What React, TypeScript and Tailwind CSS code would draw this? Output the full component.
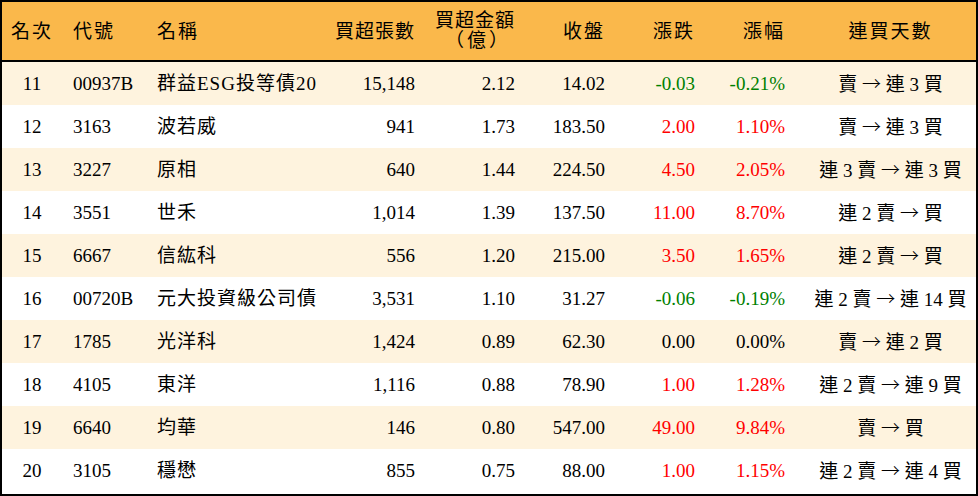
const rows = [
  { rank: '11', code: '00937B', name: '群益ESG投等債20', vol: '15,148', amt: '2.12', close: '14.02', chg: '-0.03', pct: '-0.21%', streak: '賣 → 連 3 買' },
  { rank: '12', code: '3163', name: '波若威', vol: '941', amt: '1.73', close: '183.50', chg: '2.00', pct: '1.10%', streak: '賣 → 連 3 買' },
  { rank: '13', code: '3227', name: '原相', vol: '640', amt: '1.44', close: '224.50', chg: '4.50', pct: '2.05%', streak: '連 3 賣 → 連 3 買' },
  { rank: '14', code: '3551', name: '世禾', vol: '1,014', amt: '1.39', close: '137.50', chg: '11.00', pct: '8.70%', streak: '連 2 賣 → 買' },
  { rank: '15', code: '6667', name: '信紘科', vol: '556', amt: '1.20', close: '215.00', chg: '3.50', pct: '1.65%', streak: '連 2 賣 → 買' },
  { rank: '16', code: '00720B', name: '元大投資級公司債', vol: '3,531', amt: '1.10', close: '31.27', chg: '-0.06', pct: '-0.19%', streak: '連 2 賣 → 連 14 買' },
  { rank: '17', code: '1785', name: '光洋科', vol: '1,424', amt: '0.89', close: '62.30', chg: '0.00', pct: '0.00%', streak: '賣 → 連 2 買' },
  { rank: '18', code: '4105', name: '東洋', vol: '1,116', amt: '0.88', close: '78.90', chg: '1.00', pct: '1.28%', streak: '連 2 賣 → 連 9 買' },
  { rank: '19', code: '6640', name: '均華', vol: '146', amt: '0.80', close: '547.00', chg: '49.00', pct: '9.84%', streak: '賣 → 買' },
  { rank: '20', code: '3105', name: '穩懋', vol: '855', amt: '0.75', close: '88.00', chg: '1.00', pct: '1.15%', streak: '連 2 賣 → 連 4 買' },
];

const cols = 'grid grid-cols-[60px_86px_182px_95px_100px_90px_90px_90px_181px]';

function tone(v: string) {
  if (v.startsWith('-')) return 'text-[#008000]';
  if (parseFloat(v) === 0) return 'text-black';
  return 'text-[#ff0000]';
}

// arrow drawn from the CJK font so it keeps the long full-width shape
function Streak({ text }: { text: string }) {
  const [from, to] = text.split(' → ');
  return (
    <>
      {from}{' '}
      <span style={{ fontFamily: '"Noto Sans CJK TC", sans-serif' }} className="font-light">→</span>
      {' '}{to}
    </>
  );
}

export default function App() {
  return (
    <div
      className="w-[978px] h-[496px] border-2 border-black bg-white text-black text-[19px] leading-none"
      style={{ fontFamily: '"Liberation Serif", "Noto Sans CJK TC", serif' }}
    >
      {/* header */}
      <div className={`${cols} h-[60px] items-center bg-[#fab84b] border-b-2 border-black`}>
        <div className="text-center tracking-[2px]">名次</div>
        <div className="pl-[11px] tracking-[2px]">代號</div>
        <div className="pl-[9px] tracking-[2px]">名稱</div>
        <div className="text-right pr-[10px] tracking-[1px]">買超張數</div>
        <div className="text-right pr-[10px] tracking-[1px] leading-[20px]">
          <div>買超金額</div>
          <div className="pr-[4px] tracking-[3px]">（億）</div>
        </div>
        <div className="text-right pr-[10px] tracking-[2px]">收盤</div>
        <div className="text-right pr-[10px] tracking-[2px]">漲跌</div>
        <div className="text-right pr-[10px] tracking-[2px]">漲幅</div>
        <div className="text-center pl-[10px] tracking-[2px]">連買天數</div>
      </div>

      {rows.map((r, i) => (
        <div
          key={r.rank}
          className={`${cols} h-[43px] items-center ${i % 2 === 0 ? 'bg-[#fef3de]' : 'bg-white'}`}
        >
          <div className="text-center">{r.rank}</div>
          <div className="pl-[11px]">{r.code}</div>
          <div className="pl-[9px] tracking-[1px] whitespace-nowrap">{r.name}</div>
          <div className="text-right pr-[10px]">{r.vol}</div>
          <div className="text-right pr-[10px]">{r.amt}</div>
          <div className="text-right pr-[10px]">{r.close}</div>
          <div className={`text-right pr-[10px] ${tone(r.chg)}`}>{r.chg}</div>
          <div className={`text-right pr-[10px] ${tone(r.pct)}`}>{r.pct}</div>
          <div className="text-center pl-[10px] whitespace-nowrap">
            <Streak text={r.streak} />
          </div>
        </div>
      ))}
    </div>
  );
}
